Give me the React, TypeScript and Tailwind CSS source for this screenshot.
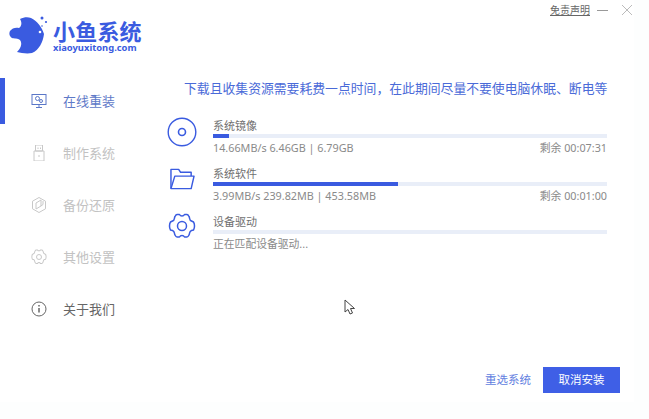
const font = { fontFamily: '"Noto Sans", "Noto Sans CJK SC", sans-serif' };

const gearPath =
  "M9 1.500h2.500c1 2 4 2 5 0H19c1 0 1.500 1 2 2 1 1.500 0 3.500 2.500 4.500l2 1c1 1.500 1 2.500 1 4s0 2.500-1 4l-2 .5c-2.500 1-1.500 3-2.500 4.500-.5 1-1 2-2 2h-2.500c-1-2-4-2-5 0H9c-1 0-1.500-1-2-2-1-1.500 0-3.500-2.500-4.500l-2-.5c-1-1.500-1-2.500-1-4s0-2.500 1-4l2-1C7 7 6 5 7 3.500c.5-1 1-2 2-2z";

function Fish() {
  return (
    <svg width="40" height="40" viewBox="0 0 40 40" className="shrink-0">
      <path
        fill="#3a5be0"
        d="M11 5 C15 3 19 3 22 4 C28 7 33 13 35 20 C34 28 30 36 23 39 C18 40 12 39 8 38 C11 35 14 30 11 26 C9 24 5 25 3 24 C0 22 0 19 1 17 C3 14 7 13 10 14 C13 12 13 8 11 5 Z"
      />
      <circle cx="31" cy="18" r="1.300" fill="#fff" />
      <circle cx="33" cy="4" r="1.500" fill="#3a5be0" />
      <circle cx="37" cy="8" r="1.100" fill="#3a5be0" />
      <circle cx="33" cy="12" r="0.800" fill="#3a5be0" />
    </svg>
  );
}

function NavIcon({ kind, color }: { kind: string; color: string }) {
  return (
    <svg width="16" height="16" viewBox="0 0 16 16" fill="none" stroke={color} strokeWidth="1">
      {kind === "screen" && (
        <>
          <rect x="1" y="1.500" width="14" height="10" />
          <circle cx="6.500" cy="5.500" r="2" />
          <circle cx="10" cy="8" r="1.500" />
          <path d="M8 11.500v3M5 14.500h6" />
        </>
      )}
      {kind === "usb" && (
        <>
          <path d="M4.500 0h7v6h-7z" />
          <path d="M3 6h10v10H3z" />
          <path d="M7 2.500v1.500M9.500 2.500v1.500M8 10v2" />
        </>
      )}
      {kind === "box" && (
        <>
          <path d="M8 .500l6.500 3.700v7.600L8 15.500l-6.500-3.700V4.200z" />
          <path d="M5 6l5-3v6l-5 3zM10 9l2-1.500V4" />
        </>
      )}
      {kind === "gear" && (
        <>
          <g transform="scale(0.57 0.6)" strokeWidth="1.700">
            <path d={gearPath} />
          </g>
          <circle cx="8" cy="8" r="2.500" />
        </>
      )}
      {kind === "info" && (
        <>
          <circle cx="8" cy="8" r="7" />
          <path d="M8 7v4.500" strokeWidth="1.500" />
          <path d="M8 4v1.500" strokeWidth="1.500" />
        </>
      )}
    </svg>
  );
}

function NavItem({ icon, label, iconColor, textColor, active }: { icon: string; label: string; iconColor: string; textColor: string; active?: boolean }) {
  return (
    <div className="relative flex h-[52px] items-center gap-[16px] pl-[31px]">
      {active && <div className="absolute top-[3px] left-0 h-[46px] w-[5px] bg-[#3a5be0]" />}
      <NavIcon kind={icon} color={iconColor} />
      <span className="text-[13px] leading-none" style={{ color: textColor }}>
        {label}
      </span>
    </div>
  );
}

function Disc() {
  return (
    <svg width="30" height="30" viewBox="0 0 30 30" fill="none" stroke="#3a5be0">
      <circle cx="15" cy="15" r="13.800" strokeWidth="1.400" />
      <circle cx="15" cy="15" r="3.500" strokeWidth="1.600" />
    </svg>
  );
}

function Folder() {
  return (
    <svg width="25" height="22" viewBox="0 0 26 22" fill="none" stroke="#3a5be0" strokeWidth="1.500" strokeLinejoin="round" className="mt-[3px] ml-[3px]">
      <path d="M1 21V1h8l2 3h11v4" />
      <path d="M1 21L5 8h20l-3 13z" />
    </svg>
  );
}

function Gear() {
  return (
    <svg width="28" height="26" viewBox="0 0 28 26" fill="none" stroke="#3a5be0" strokeWidth="1.500" strokeLinejoin="round" className="ml-[1px]">
      <path d={gearPath} />
      <circle cx="14" cy="13" r="4.500" />
    </svg>
  );
}

function Task({ icon, title, percent, meta, remain }: { icon: React.ReactNode; title: string; percent: number; meta: string; remain?: string }) {
  return (
    <div className="flex h-[48px] items-start">
      <div className="flex h-[48px] w-[46px] items-start">{icon}</div>
      <div className="flex w-[394px] flex-col">
        <div className="h-[16px] text-[11px] leading-[18px] text-[#6f6f6f]">{title}</div>
        <div className="mt-[1px] h-[4px] bg-[#e9eef8]">
          <div className="h-full bg-[#3a5be0]" style={{ width: `${percent}%` }} />
        </div>
        <div className="mt-[2px] flex justify-between text-[10.800px] leading-[16px] text-[#8a8a8a]">
          <span>{meta}</span>
          {remain && <span>{remain}</span>}
        </div>
      </div>
    </div>
  );
}

export default function App() {
  return (
    <div className="h-[419px] w-[649px] overflow-hidden bg-[#fdfefe]" style={font}>
      <div className="relative flex h-[402px] w-[634px] flex-col bg-white">
        {/* Header */}
        <div className="flex h-[74px] items-start justify-between">
          <div className="flex items-start gap-[4px] pt-[14px] pl-[9px]">
            <Fish />
            <div className="flex flex-col pt-[6px]">
              <span className="text-[22px] leading-[22px] font-bold tracking-[0.2px] text-[#3a5be0]">小鱼系统</span>
              <span className="mt-[1px] text-[9.400px] leading-[10px] font-bold text-[#3a5be0]">xiaoyuxitong.com</span>
            </div>
          </div>
          <div className="flex items-center pt-[3px] pr-[2px]">
            <span className="text-[10px] leading-[14px] text-[#666] underline">免责声明</span>
            <div className="ml-[7px] h-[1px] w-[11px] bg-[#999]" />
            <svg width="10" height="10" viewBox="0 0 10 10" className="ml-[14px]" stroke="#aaa" strokeWidth="0.8">
              <path d="M0 0l10 10M10 0L0 10" />
            </svg>
          </div>
        </div>

        <div className="flex flex-1">
          {/* Sidebar */}
          <div className="w-[167px] shrink-0 pt-[1px]">
            <NavItem icon="screen" label="在线重装" iconColor="#5a77c8" textColor="#5f7ac8" active />
            <NavItem icon="usb" label="制作系统" iconColor="#c8c8c8" textColor="#c2c2c2" />
            <NavItem icon="box" label="备份还原" iconColor="#c8c8c8" textColor="#c2c2c2" />
            <NavItem icon="gear" label="其他设置" iconColor="#c8c8c8" textColor="#c2c2c2" />
            <NavItem icon="info" label="关于我们" iconColor="#666" textColor="#666" />
          </div>

          {/* Main */}
          <div className="flex flex-1 flex-col">
            <div className="mt-[4px] pl-[17px] text-[12.830px] leading-[20px] whitespace-nowrap text-[#4a6ad8]">
              下载且收集资源需要耗费一点时间，在此期间尽量不要使电脑休眠、断电等
            </div>
            <div className="mt-[19px] flex flex-col">
              <Task icon={<Disc />} title="系统镜像" percent={4} meta="14.66MB/s 6.46GB | 6.79GB" remain="剩余 00:07:31" />
              <Task icon={<Folder />} title="系统软件" percent={47} meta="3.99MB/s 239.82MB | 453.58MB" remain="剩余 00:01:00" />
              <Task icon={<Gear />} title="设备驱动" percent={0} meta="正在匹配设备驱动..." />
            </div>
            <div className="mt-auto mb-[9px] flex items-center justify-end pr-[14px]">
              <span className="mr-[12px] text-[11.500px] text-[#5f7ee0]">重选系统</span>
              <div className="flex h-[26px] w-[77px] items-center justify-center bg-[#3f5fe6] text-[11.500px] text-white">取消安装</div>
            </div>
          </div>
        </div>

        {/* Mouse pointer captured in the shot */}
        <svg width="12" height="17" viewBox="0 0 12 17" className="absolute top-[299px] left-[344px]" fill="#fff" stroke="#444" strokeWidth="1">
          <path d="M1 1v12l3-2.500 2 4.500 2.500-1-2-4.500h4z" />
        </svg>
      </div>
    </div>
  );
}
